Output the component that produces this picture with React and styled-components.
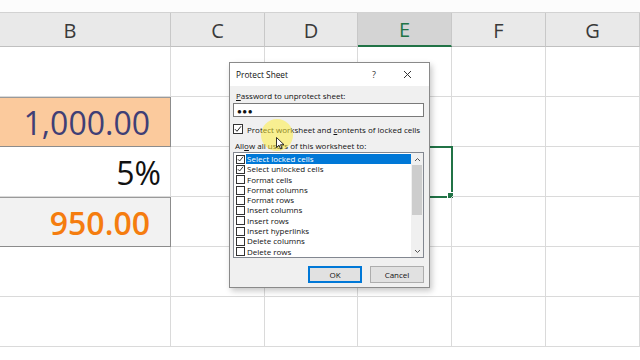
import React from "react";
import styled, { createGlobalStyle, css } from "styled-components";

const Global = createGlobalStyle`
  html, body { margin: 0; padding: 0; background: #fff; }
  body { width: 640px; height: 360px; overflow: hidden; font-family: "Open Sans", "Noto Sans", sans-serif; }
  * { box-sizing: border-box; }
`;

const Page = styled.div`
  position: relative;
  width: 640px;
  height: 360px;
  overflow: hidden;
  background: #fff;
  display: flex;
  flex-direction: column;
`;

const TopBand = styled.div`
  height: 13px;
  flex: none;
  background: #fcfcfc;
  border-bottom: 1px solid #d2d2d2;
`;

const Grid = styled.div`
  display: grid;
  grid-template-columns: 171px 94px 93px 94px 94px 94px;
  grid-auto-rows: 50px;
  grid-template-rows: 34px;
`;

const HeadCell = styled.div`
  display: flex;
  align-items: flex-end;
  justify-content: center;
  padding-bottom: 2px;
  padding-right: ${(p) => p.$shift || 0}px;
  background: ${(p) => (p.$active ? "#d4d4d4" : "#e9e9e9")};
  color: ${(p) => (p.$active ? "#217346" : "#3a3a3a")};
  border-right: 1px solid #c8c8c8;
  border-bottom: ${(p) => (p.$active ? "2px solid #217346" : "1px solid #c0c0c0")};
  font-family: "Open Sans", sans-serif;
  font-size: 20px;
  line-height: 26px;
`;

const variants = {
  input: css`
    background: #fbca9d;
    color: #3f3f76;
    border-right-color: #8c8c8c;
    border-bottom-color: #8c8c8c;
    box-shadow: inset 0 1px 0 #9a9a9a;
    padding-right: 20px;
  `,
  percent: css`
    color: #111;
    padding-right: 9px;
  `,
  calc: css`
    background: #f2f2f2;
    color: #f57d0f;
    font-weight: 600;
    border-right-color: #8c8c8c;
    border-bottom-color: #8c8c8c;
    box-shadow: inset 0 1px 0 #9a9a9a;
    padding-right: 20px;
  `,
};

const Cell = styled.div`
  position: relative;
  display: flex;
  align-items: center;
  justify-content: flex-end;
  padding-top: 2px;
  border-right: 1px solid #dadada;
  border-bottom: 1px solid #dadada;
  font-family: "Open Sans", sans-serif;
  font-size: 32px;
  line-height: 1;
  ${(p) => p.$variant && variants[p.$variant]}
  ${(p) =>
    p.$selected &&
    css`
      outline: 2px solid #217346;
      outline-offset: -1px;
      &::after {
        content: "";
        position: absolute;
        right: -3px;
        bottom: -3px;
        width: 5px;
        height: 5px;
        background: #217346;
        border: 1px solid #fff;
      }
    `}
`;

/* ---------- Dialog ---------- */

const Dialog = styled.div`
  position: absolute;
  left: 229px;
  top: 62px;
  width: 201px;
  height: 226px;
  background: #f0f0f0;
  border: 1px solid #8a8a8a;
  box-shadow: 2px 3px 6px rgba(0, 0, 0, 0.22);
  display: flex;
  flex-direction: column;
  font-family: "Open Sans", "Noto Sans", sans-serif;
  font-size: 8px;
  color: #111;
  z-index: 5;
`;

const TitleBar = styled.div`
  height: 23px;
  flex: none;
  background: #fff;
  display: flex;
  align-items: center;
  padding-left: 6px;
`;

const Title = styled.div`
  flex: 1;
  font-size: 8.3px;
`;

const TitleBtn = styled.div`
  width: ${(p) => p.$w}px;
  display: flex;
  justify-content: center;
  align-items: center;
  color: #333;
  font-size: 9px;
`;

const Body = styled.div`
  flex: 1;
  display: flex;
  flex-direction: column;
  padding: 4px 5px 0 3px;
`;

const Label = styled.div`
  height: 12px;
  line-height: 12px;
  margin-top: ${(p) => p.$mt || 0}px;
  padding-left: ${(p) => p.$pl || 2}px;
  white-space: nowrap;
`;

const Key = styled.span`
  text-decoration: underline;
  text-underline-offset: 1px;
`;

const PasswordBox = styled.div`
  margin-top: 1px;
  height: 14px;
  background: #fff;
  border: 1px solid #7a7a7a;
  display: flex;
  align-items: center;
  padding-left: 3px;
  font-size: 8px;
  letter-spacing: 0.5px;
`;

const CheckRow = styled.div`
  margin-top: 6px;
  display: flex;
  align-items: center;
  gap: 4px;
  height: 12px;
  white-space: nowrap;
`;

const Box = styled.div`
  width: ${(p) => p.$size}px;
  height: ${(p) => p.$size}px;
  flex: none;
  background: #fff;
  border: 1px solid #333;
  display: flex;
  align-items: center;
  justify-content: center;
`;

const ListBox = styled.div`
  height: 106px;
  background: #fff;
  border: 1px solid #828790;
  display: flex;
`;

const Items = styled.div`
  flex: 1;
  padding-top: 1px;
  display: flex;
  flex-direction: column;
`;

const Item = styled.div`
  height: 10.3px;
  display: flex;
  align-items: center;
  padding-left: 2px;
  gap: 1px;
`;

const ItemText = styled.div`
  flex: 1;
  height: 10.3px;
  line-height: 10.3px;
  padding-left: 1px;
  white-space: nowrap;
  background: ${(p) => (p.$sel ? "#0078d7" : "transparent")};
  color: ${(p) => (p.$sel ? "#fff" : "#111")};
`;

const ScrollBar = styled.div`
  width: 12px;
  flex: none;
  background: #f0f0f0;
  display: flex;
  flex-direction: column;
  align-items: center;
`;

const Arrow = styled.div`
  height: 12px;
  display: flex;
  align-items: center;
  justify-content: center;
`;

const Thumb = styled.div`
  width: 10px;
  height: 50px;
  background: #cdcdcd;
`;

const Spacer = styled.div`
  flex: 1;
`;

const Buttons = styled.div`
  margin-top: 8px;
  display: flex;
  justify-content: flex-end;
  gap: 8px;
`;

const Button = styled.div`
  width: 54px;
  height: 17px;
  display: flex;
  align-items: center;
  justify-content: center;
  background: #e1e1e1;
  border: ${(p) => (p.$primary ? "2px solid #0078d7" : "1px solid #adadad")};
`;

const Highlight = styled.div`
  position: absolute;
  left: 261px;
  top: 119px;
  width: 32px;
  height: 32px;
  border-radius: 50%;
  background: rgba(255, 238, 50, 0.5);
  z-index: 6;
  pointer-events: none;
`;

const Cursor = styled.svg`
  position: absolute;
  left: 276px;
  top: 137px;
  z-index: 7;
`;

const Check = () => (
  <svg width="8" height="8" viewBox="0 0 8 8">
    <path d="M1 4.2 L3 6.3 L7 1.3" fill="none" stroke="#222" strokeWidth="1" />
  </svg>
);

const Chevron = ({ up }) => (
  <svg width="7" height="5" viewBox="0 0 7 5">
    <path d={up ? "M1 4 L3.5 1.5 L6 4" : "M1 1 L3.5 3.5 L6 1"} fill="none" stroke="#555" strokeWidth="1" />
  </svg>
);

const columns = [
  { label: "B", shift: 30 },
  { label: "C" },
  { label: "D" },
  { label: "E", active: true },
  { label: "F" },
  { label: "G" },
];

const rows = [
  {},
  { 0: { text: "1,000.00", variant: "input" } },
  { 0: { text: "5%", variant: "percent" }, 3: { selected: true } },
  { 0: { text: "950.00", variant: "calc" } },
  {},
  {},
];

const items = [
  ["Select locked cells", true],
  ["Select unlocked cells", true],
  ["Format cells", false],
  ["Format columns", false],
  ["Format rows", false],
  ["Insert columns", false],
  ["Insert rows", false],
  ["Insert hyperlinks", false],
  ["Delete columns", false],
  ["Delete rows", false],
];

export default function App() {
  return (
    <Page>
      <Global />
      <TopBand />
      <Grid>
        {columns.map((c) => (
          <HeadCell key={c.label} $shift={c.shift} $active={c.active}>
            {c.label}
          </HeadCell>
        ))}
        {rows.map((r, ri) =>
          columns.map((c, ci) => {
            const cell = r[ci] || {};
            return (
              <Cell key={`${ri}-${ci}`} $variant={cell.variant} $selected={cell.selected}>
                {cell.text}
              </Cell>
            );
          })
        )}
      </Grid>

      <Dialog>
        <TitleBar>
          <Title>Protect Sheet</Title>
          <TitleBtn $w={22}>?</TitleBtn>
          <TitleBtn $w={44}>
            <svg width="9" height="9" viewBox="0 0 9 9">
              <path d="M1 1 L8 8 M8 1 L1 8" stroke="#333" strokeWidth="1" />
            </svg>
          </TitleBtn>
        </TitleBar>
        <Body>
          <Label $pl={3}>
            <Key>P</Key>assword to unprotect sheet:
          </Label>
          <PasswordBox>●●●</PasswordBox>
          <CheckRow>
            <Box $size={10}>
              <Check />
            </Box>
            <span>
              Protect worksheet and <Key>c</Key>ontents of locked cells
            </span>
          </CheckRow>
          <Label $pl={2} $mt={5}>
            All<Key>o</Key>w all users of this worksheet to:
          </Label>
          <ListBox>
            <Items>
              {items.map(([t, on], i) => (
                <Item key={t}>
                  <Box $size={9}>{on && <Check />}</Box>
                  <ItemText $sel={i === 0}>{t}</ItemText>
                </Item>
              ))}
            </Items>
            <ScrollBar>
              <Arrow>
                <Chevron up />
              </Arrow>
              <Thumb />
              <Spacer />
              <Arrow>
                <Chevron />
              </Arrow>
            </ScrollBar>
          </ListBox>
          <Buttons>
            <Button $primary>OK</Button>
            <Button>Cancel</Button>
          </Buttons>
        </Body>
      </Dialog>

      <Highlight />
      <Cursor width="9" height="13" viewBox="0 0 9 13">
        <path d="M0.5 0.5 L0.5 10.5 L3 8.2 L4.6 12 L6 11.4 L4.5 7.7 L8 7.7 Z" fill="#fff" stroke="#000" strokeWidth="0.8" />
      </Cursor>
    </Page>
  );
}
